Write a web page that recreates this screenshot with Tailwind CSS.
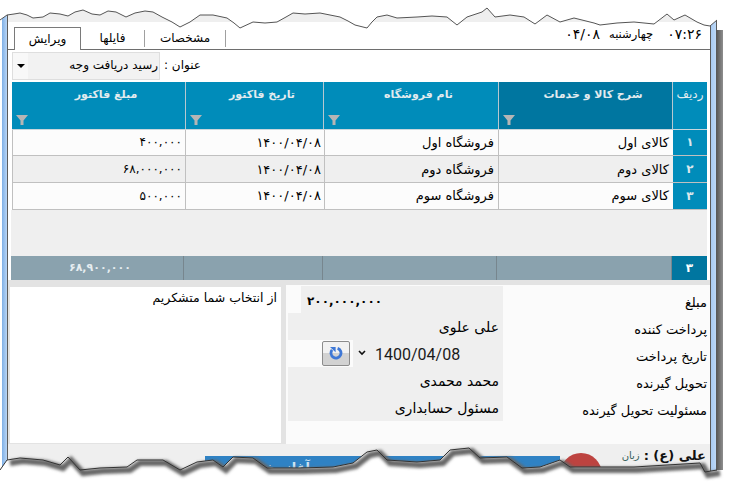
<!DOCTYPE html>
<html lang="fa">
<head>
  <meta charset="UTF-8">
  <title>رسید دریافت وجه</title>
  <script src="https://cdn.jsdelivr.net/npm/@tailwindcss/browser@4"></script>
</head>
<body class="bg-white">
<div class="relative w-[733px] h-[496px] overflow-hidden bg-white flex font-['DejaVu_Sans',sans-serif] text-[12px] text-black">

  <!-- window frame left -->
  <div class="ml-[2px] w-[6px] bg-gradient-to-r from-[#7fb0e6] to-[#b9d5f5] border-r border-[#5a5a5a]"></div>

  <!-- window content -->
  <div class="w-[702px] flex flex-col">
    <div class="h-[22px] bg-[#efefef]"></div>

    <!-- tabs + clock -->
    <div class="h-[28px] pt-[5px] flex border-b border-[#6e6e6e]">
      <div dir="rtl" class="ml-[6px] w-[67px] h-[23px] bg-white border border-b-0 border-[#7a7a7a] flex items-center justify-center">ویرایش</div>
      <div dir="rtl" class="w-[64px] h-[17px] mt-[3px] border-r border-[#a0a0a0] flex items-center justify-center">فایلها</div>
      <div dir="rtl" class="w-[81px] h-[17px] mt-[3px] border-r border-[#a0a0a0] flex items-center justify-center">مشخصات</div>
      <div dir="rtl" class="ml-auto mr-[8px] h-[16px] flex items-center">
        <span class="text-[14px]">۰۷:۲۶</span>
        <span class="mr-[14px] text-[11.5px]">چهارشنبه</span>
        <span class="mr-[9px] text-[14px]">۰۴/۰۸</span>
      </div>
    </div>

    <!-- title row -->
    <div class="h-[32px] pt-[2px] pl-[4px] flex items-start">
      <div class="w-[148px] h-[28px] bg-[#f2f2f2] border border-[#dedede] flex">
        <div class="w-[15px] h-full bg-[#f8f8f8] flex items-center justify-center">
          <div class="w-0 h-0 border-x-[4px] border-x-transparent border-t-[4px] border-t-black"></div>
        </div>
        <div dir="rtl" class="flex-1 pr-[1px] pb-[2px] flex items-center justify-start">رسید دریافت وجه</div>
      </div>
      <div dir="rtl" class="ml-[3px] mt-[4px] w-[38px]">عنوان :</div>
    </div>

    <!-- grid header -->
    <div dir="rtl" class="ml-[4px] w-[695px] h-[48px] grid grid-cols-[34px_175px_174px_139px_173px] bg-[#008cba] text-[#e2ebef] font-bold text-[11px] border-b border-[#c9d6dc]">
      <div class="flex justify-center pt-[3px] font-normal text-[12px]">ردیف</div>
      <div class="relative bg-[#0076a0] border-x border-[#b8c8d0] flex justify-center pt-[5px] pl-[15px]">شرح کالا و خدمات
        <svg class="absolute left-[4px] bottom-[3px]" width="12" height="12" viewBox="0 0 12 12"><path d="M0 1h12L7.5 6.5V11h-3V6.5z" fill="#b5b5b5"/></svg>
      </div>
      <div class="relative flex justify-center pt-[5px] pl-[15px]">نام فروشگاه
        <svg class="absolute left-[4px] bottom-[3px]" width="12" height="12" viewBox="0 0 12 12"><path d="M0 1h12L7.5 6.5V11h-3V6.5z" fill="#b5b5b5"/></svg>
      </div>
      <div class="relative border-x border-[#b8c8d0] flex justify-center pt-[5px] pl-[15px]">تاریخ فاکتور
        <svg class="absolute left-[4px] bottom-[3px]" width="12" height="12" viewBox="0 0 12 12"><path d="M0 1h12L7.5 6.5V11h-3V6.5z" fill="#b5b5b5"/></svg>
      </div>
      <div class="relative flex justify-center pt-[5px] pl-[15px]">مبلغ فاکتور
        <svg class="absolute left-[4px] bottom-[3px]" width="12" height="12" viewBox="0 0 12 12"><path d="M0 1h12L7.5 6.5V11h-3V6.5z" fill="#b5b5b5"/></svg>
      </div>
    </div>

    <!-- grid rows -->
    <div dir="rtl" class="ml-[4px] w-[695px] h-[27px] grid grid-cols-[34px_175px_174px_139px_173px] bg-[#fcfcfc] border-b border-[#c0c0c0] items-stretch">
      <div class="bg-[#008cba] text-[#dce7ec] font-bold flex items-center justify-center">۱</div>
      <div class="border-l border-[#c0c0c0] pr-[4px] flex items-center text-[13px]">کالای اول</div>
      <div class="border-l border-[#c0c0c0] pr-[4px] flex items-center text-[13px]">فروشگاه اول</div>
      <div class="border-l border-[#c0c0c0] pr-[3px] flex items-center text-[13px]">۱۴۰۰/۰۴/۰۸</div>
      <div class="border-l border-[#c0c0c0] pr-[3px] flex items-center">۴۰۰,۰۰۰</div>
    </div>
    <div dir="rtl" class="ml-[4px] w-[695px] h-[27px] grid grid-cols-[34px_175px_174px_139px_173px] bg-[#efefef] border-b border-[#c0c0c0] items-stretch">
      <div class="bg-[#008cba] text-[#dce7ec] font-bold flex items-center justify-center">۲</div>
      <div class="border-l border-[#c0c0c0] pr-[4px] flex items-center text-[13px]">کالای دوم</div>
      <div class="border-l border-[#c0c0c0] pr-[4px] flex items-center text-[13px]">فروشگاه دوم</div>
      <div class="border-l border-[#c0c0c0] pr-[3px] flex items-center text-[13px]">۱۴۰۰/۰۴/۰۸</div>
      <div class="border-l border-[#c0c0c0] pr-[3px] flex items-center">۶۸,۰۰۰,۰۰۰</div>
    </div>
    <div dir="rtl" class="ml-[4px] w-[695px] h-[27px] grid grid-cols-[34px_175px_174px_139px_173px] bg-[#fcfcfc] border-b border-[#c0c0c0] items-stretch">
      <div class="bg-[#008cba] text-[#dce7ec] font-bold flex items-center justify-center">۳</div>
      <div class="border-l border-[#c0c0c0] pr-[4px] flex items-center text-[13px]">کالای سوم</div>
      <div class="border-l border-[#c0c0c0] pr-[4px] flex items-center text-[13px]">فروشگاه سوم</div>
      <div class="border-l border-[#c0c0c0] pr-[3px] flex items-center text-[13px]">۱۴۰۰/۰۴/۰۸</div>
      <div class="border-l border-[#c0c0c0] pr-[3px] flex items-center">۵۰۰,۰۰۰</div>
    </div>

    <!-- empty area -->
    <div class="ml-[3px] w-[696px] h-[46px] bg-[#efefef]"></div>

    <!-- totals -->
    <div dir="rtl" class="ml-[3px] w-[696px] h-[24px] grid grid-cols-[35px_175px_174px_139px_173px] bg-[#8aa2ae] text-[#e6edf0] font-bold">
      <div class="bg-[#0076a0] text-white flex items-center justify-center">۳</div>
      <div class="border-r border-[#77868e]"></div>
      <div class="border-r border-[#77868e]"></div>
      <div class="border-r border-[#77868e]"></div>
      <div class="border-r border-[#77868e] pr-[52px] flex items-center text-[11px]">۶۸,۹۰۰,۰۰۰</div>
    </div>
    <div class="h-[5px] bg-[#e3e3e3]"></div>

    <!-- details panel -->
    <div class="h-[160px] flex bg-[#e3e3e3]">
      <div dir="rtl" class="ml-[2px] mt-[2px] w-[271px] h-[156px] bg-white pr-[4px] pt-[2px] text-[12.5px]">از انتخاب شما متشکریم</div>
      <div class="ml-[5px] flex-1 bg-[#fbfbfb] flex pt-[1px]">
        <div class="ml-[2px] w-[215px] h-[135px] bg-[#efefef] flex flex-col">
          <div class="h-[27px] flex">
            <div class="w-[15px] -ml-[2px] bg-[#fbfbfb]"></div>
            <div class="pl-[6px] pt-[3px] flex items-center font-bold text-[12px]">۲۰۰,۰۰۰,۰۰۰</div>
          </div>
          <div dir="rtl" class="h-[27px] pr-[4px] pt-[3px] flex items-center text-[14px]">علی علوی</div>
          <div class="h-[27px] flex items-center">
            <div class="w-[65px] h-full bg-[#fbfbfb] flex items-center justify-end pr-[3px]">
              <div class="w-[28px] h-[25px] rounded-[2px] border border-[#8c8c8c] bg-gradient-to-b from-[#f2f2f2] from-50% to-[#d2d2d2] to-50% flex items-center justify-center">
                <svg width="14" height="14" viewBox="0 0 14 14" fill="none"><path d="M8.6 2.3A5 5 0 1 1 3.1 3.9" stroke="#3f78d6" stroke-width="2.8"/><path d="M1 1h5.6v5.2z" fill="#3f78d6"/></svg>
              </div>
            </div>
            <svg class="ml-[5px]" width="8" height="6" viewBox="0 0 8 6" fill="none"><path d="M1 1l3 3 3-3" stroke="#111" stroke-width="1.6"/></svg>
            <span class="ml-[9px] pt-[3px] font-['Roboto',sans-serif] text-[16px] text-[#1a1a1a]">1400/04/08</span>
          </div>
          <div dir="rtl" class="h-[27px] pr-[4px] pt-[3px] flex items-center text-[14px]">محمد محمدی</div>
          <div dir="rtl" class="h-[27px] pr-[4px] pt-[3px] flex items-center text-[14px]">مسئول حسابداری</div>
        </div>
        <div dir="rtl" class="flex-1 pr-[3px] pt-[3px] flex flex-col text-[13px]">
          <div class="h-[27px] flex items-center">مبلغ</div>
          <div class="h-[27px] flex items-center">پرداخت کننده</div>
          <div class="h-[27px] flex items-center">تاریخ پرداخت</div>
          <div class="h-[27px] flex items-center">تحویل گیرنده</div>
          <div class="h-[27px] flex items-center">مسئولیت تحویل گیرنده</div>
        </div>
      </div>
    </div>

    <!-- status strip -->
    <div class="flex-1 bg-[#efefef] flex items-start">
      <div class="ml-[197px] mt-[12px] w-[355px] h-[40px] bg-[#2f82c4] overflow-hidden text-[#cfe3f3] text-[13px] font-bold pr-[250px] pt-[2px]" dir="rtl">آغاز بخش</div>
      <div class="mt-[9px] w-[42px] h-[42px] rounded-full bg-[#bd4340]"></div>
      <div dir="rtl" class="ml-auto mr-[4px] mt-[2px] flex items-center gap-[4px]">
        <span class="font-bold text-[13px] text-[#111]">علی (ع) :</span>
        <span class="text-[10px] text-[#35605a]">زبان</span>
      </div>
    </div>
  </div>

  <!-- window frame right -->
  <div class="w-[7px] bg-gradient-to-r from-[#a9cbf3] to-[#bcd8f7] border-x border-[#5a5a5a]"></div>
  <div class="mt-[30px] w-[6px] h-[440px] bg-gradient-to-r from-[#5c5c5c] to-[#8f8f8f] blur-[0.6px]"></div>

  <!-- torn screenshot edges -->
  <svg class="absolute left-0 top-0" width="733" height="496" viewBox="0 0 733 496">
    <defs>
      <filter id="tear" x="-5%" y="-50%" width="110%" height="200%"><feGaussianBlur stdDeviation="1.6"/></filter>
    </defs>
    <path fill="#fff" d="M0 0V20L7 15 14 14 20 13 27 15 33 18 43 17 50 13 60 14 68 16 75 12 83 10 92 14 100 15 108 11 116 12 126 17 135 13 145 11 153 12 162 17 172 22 180 27 190 22 200 15 213 15 227 18 234 23 240 28 253 22 265 23 277 22 286 17 293 13 305 14 320 13 340 17 348 21 355 25 367 28 372 22 377 17 387 15 397 18 417 17 432 16 447 17 457 25 467 17 482 12 487 8 495 17 510 15 524 17 535 24 547 15 560 22 574 18 594 23 600 25 617 23 634 22 654 24 667 14 674 20 685 15 697 22 704 25 710 26 717 20 733 20V0Z"/>
    <path fill="none" stroke="#555" stroke-width="1" d="M0 20L7 15 14 14 20 13 27 15 33 18 43 17 50 13 60 14 68 16 75 12 83 10 92 14 100 15 108 11 116 12 126 17 135 13 145 11 153 12 162 17 172 22 180 27 190 22 200 15 213 15 227 18 234 23 240 28 253 22 265 23 277 22 286 17 293 13 305 14 320 13 340 17 348 21 355 25 367 28 372 22 377 17 387 15 397 18 417 17 432 16 447 17 457 25 467 17 482 12 487 8 495 17 510 15 524 17 535 24 547 15 560 22 574 18 594 23 600 25 617 23 634 22 654 24 667 14 674 20 685 15 697 22 704 25 710 26 717 20"/>
    <path fill="#fff" d="M0 470L7 460 20 458 43 460 60 465 68 457 80 470 100 468 127 467 137 460 163 460 180 470 197 462 213 460 223 467 233 457 253 458 267 468 300 468 333 467 353 463 367 452 377 450 387 460 417 462 440 460 450 450 469 448 480 458 507 457 522 468 540 467 560 460 570 467 600 467 634 467 667 465 700 463 705 472 717 470 733 470V496H0Z"/>
    <path filter="url(#tear)" fill="none" stroke="#666" stroke-width="6" transform="translate(3 3)" d="M7 460 20 458 43 460 60 465 68 457 80 470 100 468 127 467 137 460 163 460 180 470 197 462 213 460 223 467 233 457 253 458 267 468 300 468 333 467 353 463 367 452 377 450 387 460 417 462 440 460 450 450 469 448 480 458 507 457 522 468 540 467 560 460 570 467 600 467 634 467 667 465 700 463 705 472 717 470"/>
    <path fill="none" stroke="#333" stroke-width="1" d="M0 470L7 460 20 458 43 460 60 465 68 457 80 470 100 468 127 467 137 460 163 460 180 470 197 462 213 460 223 467 233 457 253 458 267 468 300 468 333 467 353 463 367 452 377 450 387 460 417 462 440 460 450 450 469 448 480 458 507 457 522 468 540 467 560 460 570 467 600 467 634 467 667 465 700 463 705 472 717 470"/>
  </svg>
</div>
</body>
</html>
